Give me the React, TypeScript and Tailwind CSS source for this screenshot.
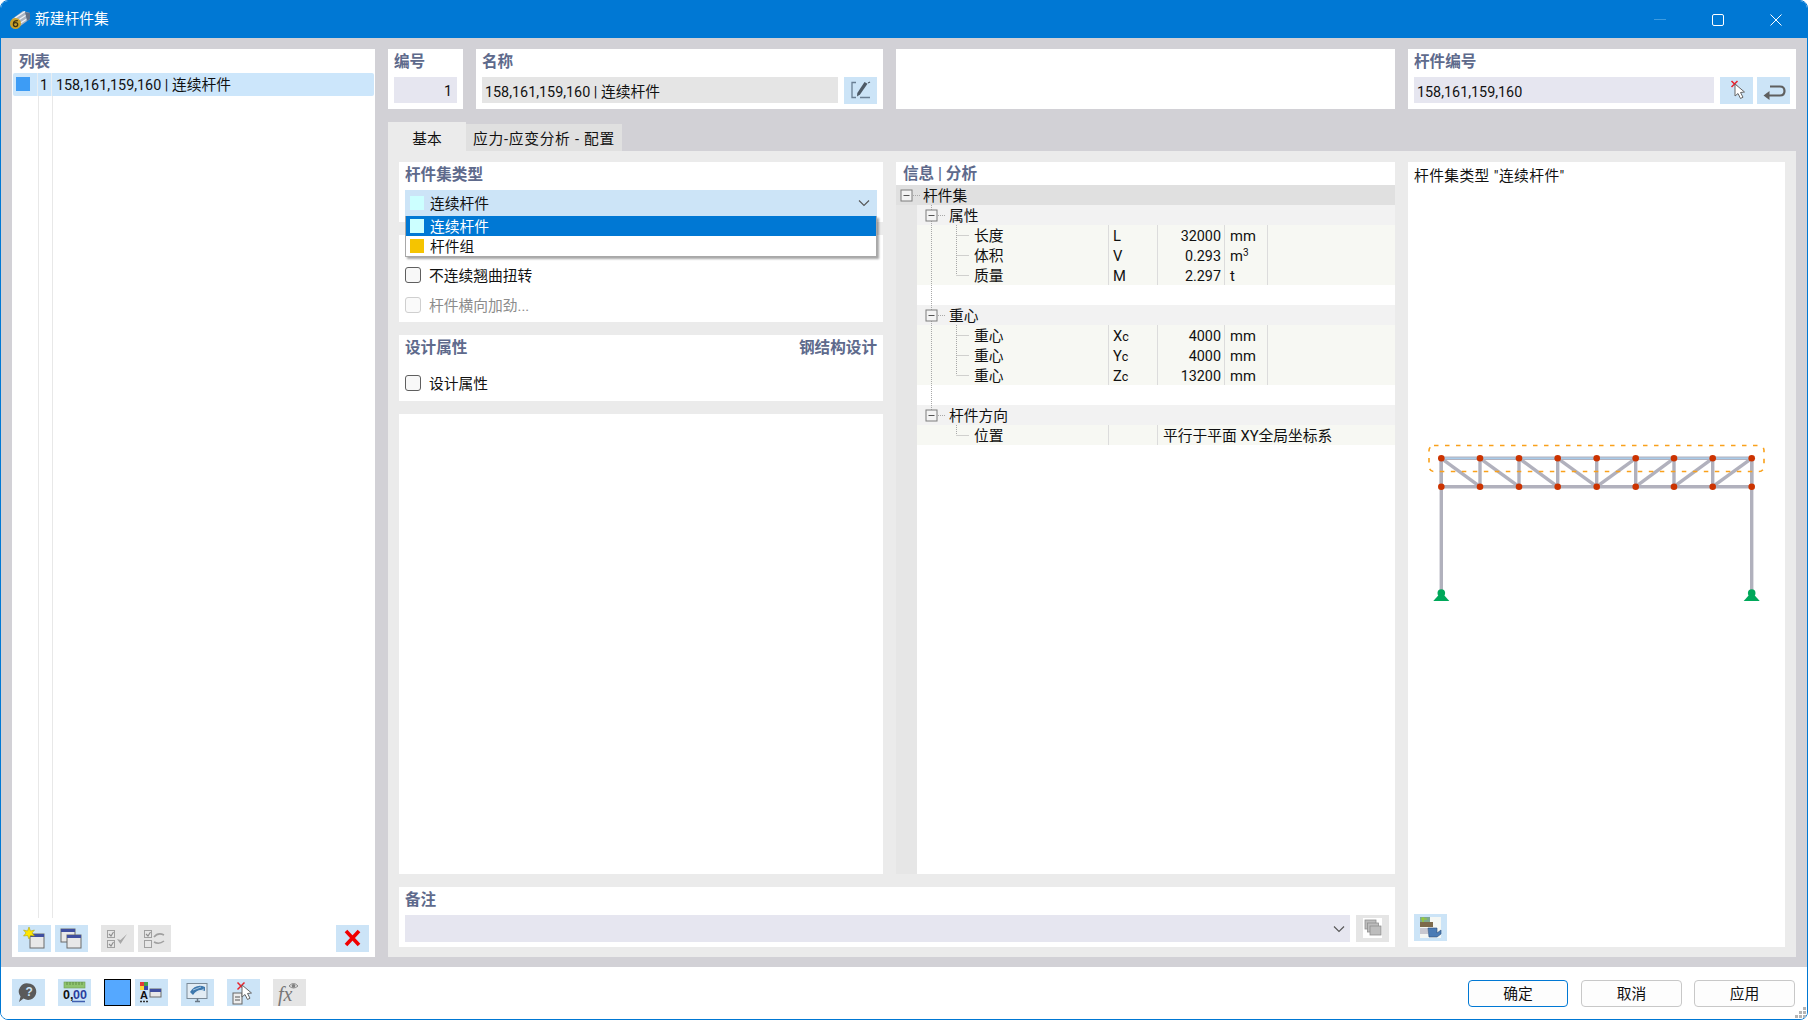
import React from "react";

const Label = ({ children, className = "" }: { children: React.ReactNode; className?: string }) => (
  <div className={`text-[#5e6a8c] text-[15.6px] font-bold leading-[26px] ${className}`}>{children}</div>
);

const Num = ({ children }: { children: React.ReactNode }) => <span className="text-[14.35px]">{children}</span>;

const IconBtn = ({ children, off = false, className = "" }: { children: React.ReactNode; off?: boolean; className?: string }) => (
  <div className={`w-[33px] h-[27px] shrink-0 flex items-center justify-center ${off ? "bg-[#e5e5e5]" : "bg-[#cce4f7]"} ${className}`}>
    <svg width="33" height="27" viewBox="0 0 33 27">{children}</svg>
  </div>
);

const Check = ({ off = false }: { off?: boolean }) => (
  <div className={`w-4 h-4 rounded-[3px] border ${off ? "border-[#cfcfcf] bg-[#fafafa]" : "border-[#5f5f5f] bg-[#f8f8f8]"}`} />
);

const Win = ({ x, y, w = 14, h = 13 }: { x: number; y: number; w?: number; h?: number }) => (
  <g>
    <rect x={x} y={y} width={w} height={h} fill="#e8e8e8" stroke="#6a6a6a" strokeWidth="1" />
    <rect x={x} y={y} width={w} height="3" fill="#3f4fa0" />
  </g>
);

const Cursor = ({ x, y, fill = "#fff" }: { x: number; y: number; fill?: string }) => (
  <path transform={`translate(${x} ${y})`} d="M0 0 L0 12 L3 9.5 L5.5 14.5 L8 13.2 L5.5 8.5 L9.5 8 Z" fill={fill} stroke="#666" strokeWidth="1" strokeLinejoin="round" />
);

const RedX = ({ x, y, s = 3 }: { x: number; y: number; s?: number }) => (
  <path d={`M${x - s} ${y - s} L${x + s} ${y + s} M${x + s} ${y - s} L${x - s} ${y + s}`} stroke="#e8212b" strokeWidth="1.5" />
);

const Row = ({ label, sym, val, unit }: { label: string; sym: React.ReactNode; val: string; unit: React.ReactNode }) => (
  <div className="h-5 flex bg-[#f7f8f3] leading-[22px]">
    <div className="w-[192px] pl-[57px] border-r border-[#dcdcdc]">{label}</div>
    <div className="w-[49px] pl-[4px] border-r border-[#dcdcdc]">{sym}</div>
    <div className="w-[67px] pr-[3px] text-right border-r border-[#dcdcdc]"><Num>{val}</Num></div>
    <div className="w-[43px] pl-[5px] border-r border-[#dcdcdc]">{unit}</div>
  </div>
);

const Group = ({ label }: { label: string }) => (
  <div className="h-5 bg-[#f2f2f2] pl-[32px] leading-[22px]">{label}</div>
);

const Sub = ({ a, b }: { a: string; b: string }) => (
  <span>{a}<span className="text-[12.5px]">{b}</span></span>
);

const Box = ({ x, y }: { x: number; y: number }) => (
  <g>
    <rect x={x - 5.5} y={y - 5.5} width="11" height="11" fill="#f4f4f4" stroke="#7d7d7d" strokeWidth="1" />
    <path d={`M${x - 3} ${y} H${x + 3}`} stroke="#555" strokeWidth="1" />
  </g>
);

const TreeLines = () => (
  <svg className="absolute left-0 top-0 pointer-events-none" width="120" height="270" viewBox="0 0 120 270">
    <g stroke="#a8a8a8" strokeWidth="1" strokeDasharray="1 1" fill="none">
      <path d="M17 10.5 H25" />
      <path d="M35.5 20 V230" />
      <path d="M42 30.5 H49 M42 130.5 H49 M42 230.5 H49" />
      <path d="M60.5 40 V90 M60.5 50.5 H73 M60.5 70.5 H73 M60.5 90.5 H73" />
      <path d="M60.5 140 V190 M60.5 150.5 H73 M60.5 170.5 H73 M60.5 190.5 H73" />
      <path d="M60.5 240 V250 M60.5 250.5 H73" />
    </g>
    <Box x={10.5} y={10.5} />
    <Box x={35.5} y={30.5} />
    <Box x={35.5} y={130.5} />
    <Box x={35.5} y={230.5} />
  </svg>
);

const Truss = () => {
  const xs = [33.3, 72, 111, 149.7, 188.7, 227.7, 266, 304.7, 343.7];
  const t = 268.3;
  const b = 296.7;
  return (
    <svg width="377" height="420" viewBox="0 0 377 420" className="block">
      <g stroke="#b1b1bd" strokeWidth="3.4" fill="none">
        <path d={`M${xs[0]} ${t} H${xs[8]}`} />
        <path d={`M${xs[0]} ${b} H${xs[8]}`} />
        {xs.map((x) => (
          <path key={x} d={`M${x} ${t} V${b}`} />
        ))}
        <path d={`M${xs[0]} ${t} V404 M${xs[8]} ${t} V404`} />
        {[0, 1, 2, 3].map((i) => (
          <path key={i} d={`M${xs[i]} ${t} L${xs[i + 1]} ${b}`} />
        ))}
        {[4, 5, 6, 7].map((i) => (
          <path key={i} d={`M${xs[i]} ${b} L${xs[i + 1]} ${t}`} />
        ))}
      </g>
      <path d={`M${xs[0]} ${t} H${xs[8]}`} stroke="#a9cbe9" strokeWidth="1.6" />
      <rect x="21" y="255.5" width="335" height="26" rx="5" fill="none" stroke="#f9a11b" strokeWidth="1.6" strokeDasharray="4.5 6.5" />
      {xs.map((x) => (
        <g key={x} fill="#cc3300">
          <circle cx={x} cy={t} r="3.3" />
          <circle cx={x} cy={b} r="3.3" />
        </g>
      ))}
      {[xs[0], xs[8]].map((x) => (
        <g key={x} fill="#00a85a">
          <circle cx={x} cy="403" r="3.8" />
          <path d={`M${x - 8} 411 L${x} 402 L${x + 8} 411 Z`} />
        </g>
      ))}
    </svg>
  );
};

export default function App() {
  return (
    <div className="w-[1808px] h-[1020px] bg-white">
      <div className="w-full h-full flex flex-col overflow-hidden rounded-[8px] border border-[#0078d4] bg-white text-[14.75px] text-[#111] font-[Roboto,'Noto_Sans_CJK_SC',sans-serif]">
        {/* Title bar */}
        <div className="h-[37px] shrink-0 bg-[#0078d4] flex items-center pl-[9px] pr-[25px] text-white">
          <svg width="20" height="20" viewBox="0 0 20 20" className="shrink-0">
            <path d="M2 9 L13 1 L20 3 L20 9 L9 17 L4 16 Z" fill="#aab4c2" />
            <path d="M5 8 L15 1.5 M7 11 L17 4.5 M9 14 L19 7.5" stroke="#eef2f6" strokeWidth="1.4" />
            <path d="M15 2 L20 3 L20 9 L17 11 Z" fill="#5f6f86" />
            <circle cx="5.5" cy="13.5" r="5.5" fill="#c9a22a" />
            <path d="M7.8 10.6 Q3.4 10.4 3.4 14 Q3.4 16.6 5.6 16.6 Q7.7 16.6 7.7 14.5 Q7.7 12.6 5.6 12.6 Q4 12.6 3.4 14" fill="none" stroke="#3d3210" strokeWidth="1.3" />
          </svg>
          <span className="ml-[5px]">新建杆件集</span>
          <div className="ml-auto flex items-center">
            <div className="w-3 h-px bg-[#3d9be0]" />
            <div className="ml-[46px] w-[12px] h-[12px] rounded-[2px] border border-white" />
            <svg className="ml-[46px]" width="12" height="12" viewBox="0 0 12 12">
              <path d="M0.5 0.5 L11.5 11.5 M11.5 0.5 L0.5 11.5" stroke="#fff" strokeWidth="1" />
            </svg>
          </div>
        </div>

        {/* Main */}
        <div className="flex-1 min-h-0 bg-[#d2d1d6] flex pl-[11px] pr-[11px] pt-[11px] pb-[10px]">
          {/* List */}
          <div className="w-[363px] shrink-0 bg-white flex flex-col">
            <Label className="pl-[7px] h-[24px]">列表</Label>
            <div className="mx-px h-[23px] bg-[#cce6fb] rounded-[2px] flex leading-[25px]">
              <div className="w-[25px] pl-[3px] pt-[4px] border-r border-[#e9eef2]">
                <div className="w-[14px] h-[14px] bg-[#3d9cf5]" />
              </div>
              <div className="w-[14px] text-right pr-[3px] border-r border-[#e9eef2]"><Num>1</Num></div>
              <div className="pl-[4px]"><Num>158,161,159,160 |</Num> 连续杆件</div>
            </div>
            <div className="flex-1 min-h-0 ml-[26px] w-[15px] border-x border-[#e8e8e8]" />
            <div className="h-[39px] shrink-0 pt-[7px] pl-[6px] pr-[6px] flex">
              <IconBtn>
                <Win x={12} y={9} w={14} h={14} />
                <path d="M11 2 L12.5 6 L16.5 5 L14 8 L16.5 11 L12.5 10.5 L11 14 L9.5 10.5 L5.5 11 L8 8 L5.5 5 L9.5 6 Z" fill="#ffe600" stroke="#a89a00" strokeWidth="0.5" />
              </IconBtn>
              <IconBtn className="ml-[4px]">
                <Win x={6} y={4} w={14} h={13} />
                <Win x={12} y={10} w={14} h={13} />
              </IconBtn>
              <IconBtn off className="ml-[13px]">
                <g fill="#e6e6e6" stroke="#a0a0a0"><rect x="6.5" y="5.5" width="7" height="7" /><rect x="6.5" y="15.5" width="7" height="7" /></g>
                <path d="M8 9 L10 11 L12.5 7 M8 19 L10 21 L12.5 17" fill="none" stroke="#8d8d8d" strokeWidth="1.1" />
                <path d="M16 14 L19.5 19 L26 9 L19.5 15 Z" fill="#a8a8a8" />
              </IconBtn>
              <IconBtn off className="ml-[4px]">
                <g fill="#e6e6e6" stroke="#a0a0a0"><rect x="6.5" y="5.5" width="7" height="7" /><rect x="6.5" y="15.5" width="7" height="7" /></g>
                <path d="M8 9 L10 11 L12.5 7" fill="none" stroke="#8d8d8d" strokeWidth="1.1" />
                <path d="M16 12 Q20 7 26 10 M26 16 Q21 20 16 17" fill="none" stroke="#a0a0a0" strokeWidth="1.6" />
              </IconBtn>
              <IconBtn className="ml-auto">
                <path d="M10 6 L23 20 M23 6 L10 20" stroke="#f00000" strokeWidth="3.6" />
              </IconBtn>
            </div>
          </div>

          {/* Right side */}
          <div className="w-[1408px] ml-[13px] shrink-0 flex flex-col">
            <div className="h-[60px] shrink-0 flex">
              <div className="w-[75px] bg-white px-[6px]">
                <Label className="h-[28px]">编号</Label>
                <div className="h-[26px] bg-[#e6e6f0] text-right pr-[5px] leading-[28px]"><Num>1</Num></div>
              </div>
              <div className="w-[407px] ml-[13px] bg-white px-[6px]">
                <Label className="h-[28px]">名称</Label>
                <div className="flex">
                  <div className="flex-1 h-[26px] bg-[#e5e5e5] pl-[3px] leading-[30px]"><Num>158,161,159,160 |</Num> 连续杆件</div>
                  <IconBtn className="ml-[6px]">
                    <path d="M12 5.5 H8 V20.5 H12 M16 20.5 H26" fill="none" stroke="#6a7f94" strokeWidth="1.3" />
                    <path d="M20.5 5 L23.5 6.8 L16 17.5 L13 19.5 L13.3 16 Z" fill="#4e5a66" />
                    <path d="M24 6 L26 5" stroke="#4e5a66" strokeWidth="1.2" />
                  </IconBtn>
                </div>
              </div>
              <div className="w-[499px] ml-[13px] bg-white" />
              <div className="w-[388px] ml-[13px] bg-white px-[6px]">
                <Label className="h-[28px]">杆件编号</Label>
                <div className="flex">
                  <div className="flex-1 h-[26px] bg-[#e6e6f0] pl-[3px] leading-[30px]"><Num>158,161,159,160</Num></div>
                  <IconBtn className="ml-[6px]">
                    <RedX x={14.5} y={7} />
                    <Cursor x={15} y={7} />
                  </IconBtn>
                  <IconBtn className="ml-[4px]">
                    <path d="M12 18.5 H23 Q27.5 18.5 27.5 14 Q27.5 9.5 23 9.5 H13" fill="none" stroke="#5f5f5f" strokeWidth="2.2" />
                    <path d="M6.5 18.5 L12.5 14 V23 Z" fill="#5f5f5f" />
                  </IconBtn>
                </div>
              </div>
            </div>

            {/* Tabs */}
            <div className="h-[29px] mt-[13px] shrink-0 flex items-end">
              <div className="w-[78px] h-[29px] bg-[#ebebeb] text-center leading-[35px]">基本</div>
              <div className="w-[156px] h-[27px] bg-[#e0e0e0] text-center leading-[30px] tracking-[0.7px] whitespace-nowrap">应力-应变分析 - 配置</div>
            </div>

            {/* Tab body */}
            <div className="flex-1 min-h-0 bg-[#ebebeb] pt-[11px] pb-[10px] pl-[11px] pr-[11px] flex">
              <div className="w-[996px] shrink-0 flex flex-col">
                <div className="flex-1 min-h-0 flex">
                  {/* Left column */}
                  <div className="w-[484px] shrink-0 flex flex-col">
                    <div className="h-[60px] shrink-0 bg-white px-[6px]">
                      <Label className="h-[28px] !leading-[26px]">杆件集类型</Label>
                      <div className="relative h-[26px] bg-[#cce4f7] flex items-center pl-[5px] pr-[5px]">
                        <div className="w-[14px] h-[14px] bg-[#ccffff]" />
                        <span className="ml-[6px] mt-[2px]">连续杆件</span>
                        <svg className="ml-auto mr-[1px]" width="14" height="14" viewBox="0 0 14 14">
                          <path d="M2 4.5 L7 9.5 L12 4.5" fill="none" stroke="#555" strokeWidth="1.1" />
                        </svg>
                        <div className="absolute left-0 right-0 top-[26px] h-[41px] z-10 bg-white border-x border-b border-[#a8a8a8] shadow-[2px_2px_2px_rgba(0,0,0,0.35)]">
                          <div className="h-5 bg-[#0078d4] text-white flex items-center pl-[4px]">
                            <div className="w-[14px] h-[14px] bg-[#ccffff]" />
                            <span className="ml-[6px] mt-[2px]">连续杆件</span>
                          </div>
                          <div className="h-5 flex items-center pl-[4px]">
                            <div className="w-[14px] h-[14px] bg-[#f5c400]" />
                            <span className="ml-[6px] mt-[2px]">杆件组</span>
                          </div>
                        </div>
                      </div>
                    </div>
                    <div className="h-[87px] mt-[13px] shrink-0 bg-white pl-[6px] pt-[32px] flex flex-col gap-[14px]">
                      <div className="flex items-center h-4">
                        <Check />
                        <span className="ml-[8px] mt-[2px]">不连续翘曲扭转</span>
                      </div>
                      <div className="flex items-center h-4 text-[#8c8c8c]">
                        <Check off />
                        <span className="ml-[8px] mt-[2px]">杆件横向加劲...</span>
                      </div>
                    </div>
                    <div className="h-[66px] mt-[13px] shrink-0 bg-white px-[6px]">
                      <div className="h-[40px] flex justify-between">
                        <Label>设计属性</Label>
                        <Label>钢结构设计</Label>
                      </div>
                      <div className="flex items-center h-4">
                        <Check />
                        <span className="ml-[8px] mt-[2px]">设计属性</span>
                      </div>
                    </div>
                    <div className="flex-1 min-h-0 mt-[13px] bg-white" />
                  </div>

                  {/* Info column */}
                  <div className="w-[499px] ml-[13px] shrink-0 bg-white flex flex-col">
                    <Label className="h-[23px] pl-[7px] !leading-[25px]">信息 | 分析</Label>
                    <div className="relative flex-1 min-h-0 flex flex-col">
                      <div className="h-5 shrink-0 bg-[#e0e0e0] pl-[27px] leading-[22px]">杆件集</div>
                      <div className="flex-1 min-h-0 flex">
                        <div className="w-[21px] shrink-0 bg-[#e6e6e6]" />
                        <div className="flex-1">
                          <Group label="属性" />
                          <Row label="长度" sym="L" val="32000" unit="mm" />
                          <Row label="体积" sym="V" val="0.293" unit={<span>m<sup className="text-[10px] leading-none">3</sup></span>} />
                          <Row label="质量" sym="M" val="2.297" unit="t" />
                          <div className="h-5" />
                          <Group label="重心" />
                          <Row label="重心" sym={<Sub a="X" b="c" />} val="4000" unit="mm" />
                          <Row label="重心" sym={<Sub a="Y" b="c" />} val="4000" unit="mm" />
                          <Row label="重心" sym={<Sub a="Z" b="c" />} val="13200" unit="mm" />
                          <div className="h-5" />
                          <Group label="杆件方向" />
                          <div className="h-5 flex bg-[#f7f8f3] leading-[22px]">
                            <div className="w-[192px] pl-[57px] border-r border-[#dcdcdc]">位置</div>
                            <div className="w-[49px] border-r border-[#dcdcdc]" />
                            <div className="pl-[5px]">平行于平面 XY全局坐标系</div>
                          </div>
                        </div>
                      </div>
                      <TreeLines />
                    </div>
                  </div>
                </div>

                {/* Notes */}
                <div className="h-[60px] mt-[13px] shrink-0 bg-white px-[6px]">
                  <Label className="h-[28px]">备注</Label>
                  <div className="flex">
                    <div className="flex-1 h-[27px] bg-[#e6e6f0] flex items-center justify-end pr-[4px]">
                      <svg width="14" height="14" viewBox="0 0 14 14">
                        <path d="M2 4.5 L7 9.5 L12 4.5" fill="none" stroke="#555" strokeWidth="1.1" />
                      </svg>
                    </div>
                    <IconBtn off className="ml-[6px]">
                      <rect x="7" y="3" width="19" height="20" fill="#fff" />
                      <g fill="#bdbdbd" stroke="#8f8f8f" strokeWidth="0.8">
                        <rect x="9" y="5" width="11" height="9" />
                        <rect x="11.5" y="8" width="11" height="9" />
                        <rect x="14" y="11" width="11" height="9" />
                      </g>
                    </IconBtn>
                  </div>
                </div>
              </div>

              {/* Preview */}
              <div className="w-[377px] ml-[13px] shrink-0 bg-white flex flex-col">
                <div className="h-[28px] shrink-0 pl-[6px] leading-[28px] tracking-[0.4px] whitespace-pre">杆件集类型 "连续杆件"</div>
                <div className="flex-1 min-h-0">
                  <Truss />
                </div>
                <div className="pl-[6px] pb-[6px]">
                  <IconBtn>
                    <rect x="6" y="3" width="21" height="21" fill="#f4f7f4" />
                    <rect x="6" y="3" width="10" height="5" fill="#7fa88f" />
                    <path d="M7 5 H13 M9 3 V8" stroke="#9ad12b" strokeWidth="1.2" />
                    <rect x="6" y="8" width="13" height="5" fill="#7d6a4a" />
                    <rect x="6" y="14" width="8" height="6" fill="#c8c8d0" />
                    <path d="M14 14 H23 V19 L27 16 V20 L23 23 H15 Z" fill="#4a7bb5" stroke="#2d4f78" strokeWidth="0.6" />
                  </IconBtn>
                </div>
              </div>
            </div>
          </div>
        </div>

        {/* Bottom bar */}
        <div className="h-[52px] shrink-0 bg-white pl-[11px] pr-[12px] pt-[12px] flex relative">
          <IconBtn>
            <path d="M16.5 4.5 A8.2 8.2 0 1 1 11.5 19.5 L7 23 L8.5 17.5 A8.2 8.2 0 0 1 16.5 4.5 Z" fill="#5a5a5a" />
            <text x="13.4" y="17" fontSize="12" fontWeight="700" fill="#cce4f7" fontFamily="Liberation Sans, sans-serif">?</text>
          </IconBtn>
          <IconBtn className="ml-[13px]">
            <rect x="6" y="3" width="21" height="6" fill="#8fc46f" stroke="#6f9f52" strokeWidth="0.6" />
            <path d="M9 3 V6 M12 3 V6 M15 3 V6 M18 3 V6 M21 3 V6 M24 3 V6" stroke="#4f7a38" strokeWidth="0.7" />
            <text x="5" y="20" fontSize="12.5" fontWeight="700" fill="#111" fontFamily="Liberation Sans, sans-serif">0,</text>
            <text x="15" y="20" fontSize="12.5" fontWeight="700" fill="#2b3f9e" fontFamily="Liberation Sans, sans-serif">00</text>
            <path d="M14 22.5 H27" stroke="#3f5fb0" strokeWidth="1.4" />
          </IconBtn>
          <div className="ml-[13px] w-[27px] h-[27px] bg-[#55a8ff] border border-black" />
          <IconBtn className="ml-[4px]">
            <rect x="5" y="3" width="4" height="4" fill="#e53935" />
            <rect x="9" y="3" width="4" height="4" fill="#43a047" />
            <rect x="5" y="7" width="4" height="4" fill="#fdd835" />
            <rect x="9" y="7" width="4" height="4" fill="#3949ab" />
            <text x="5" y="20" fontSize="11" fontWeight="700" fill="#111" fontFamily="Liberation Sans, sans-serif">A</text>
            <path d="M5 22.5 H14" stroke="#333" strokeWidth="1.6" strokeDasharray="2 1" />
            <Win x={15} y={10} w={11} h={8} />
          </IconBtn>
          <IconBtn className="ml-[13px]">
            <rect x="6" y="4.5" width="20" height="15" fill="#e2ecf4" stroke="#7a8a98" strokeWidth="1" />
            <path d="M9 13 Q15 4 24 8 L24 12 Q17 9 12 16 Z" fill="#3f79ae" />
            <path d="M12 11 L20 8 M15 14 L23 10" stroke="#cfe2f2" strokeWidth="0.7" />
            <path d="M14 22.5 H19 M16.5 19.5 V22" stroke="#6a7886" strokeWidth="1.5" />
          </IconBtn>
          <IconBtn className="ml-[13px]">
            <rect x="6" y="14" width="9" height="11" fill="#eee" stroke="#666" strokeWidth="1" />
            <path d="M8 18 H13 M8 21 H13" stroke="#555" strokeWidth="1" />
            <RedX x={14} y={7} s={3.5} />
            <Cursor x={15} y={6} />
          </IconBtn>
          <IconBtn off className="ml-[13px]">
            <text x="5" y="22" fontSize="20" fontStyle="italic" fill="#777" fontFamily="Liberation Serif, serif">fx</text>
            <path d="M16 7 Q20.5 2 25 7 Q20.5 11 16 7 Z" fill="#e5e5e5" stroke="#808080" strokeWidth="0.9" />
            <circle cx="20.5" cy="6.8" r="1.9" fill="#808080" />
          </IconBtn>
          <div className="ml-auto flex pt-px">
            <div className="w-[100px] h-[27px] rounded-[4px] border border-[#0078d4] bg-[#fdfdfd] text-center leading-[27px]">确定</div>
            <div className="w-[101px] h-[27px] ml-[13px] rounded-[4px] border border-[#c8c8c8] bg-[#fdfdfd] text-center leading-[27px]">取消</div>
            <div className="w-[101px] h-[27px] ml-[12px] rounded-[4px] border border-[#c8c8c8] bg-[#fdfdfd] text-center leading-[27px]">应用</div>
          </div>
          <svg className="absolute right-[1px] bottom-[1px]" width="11" height="11" viewBox="0 0 11 11">
            <g fill="#b4b4b4">
              <rect x="8" y="0" width="3" height="3" />
              <rect x="4" y="4" width="3" height="3" />
              <rect x="8" y="4" width="3" height="3" />
              <rect x="0" y="8" width="3" height="3" />
              <rect x="4" y="8" width="3" height="3" />
              <rect x="8" y="8" width="3" height="3" />
            </g>
          </svg>
        </div>
      </div>
    </div>
  );
}
